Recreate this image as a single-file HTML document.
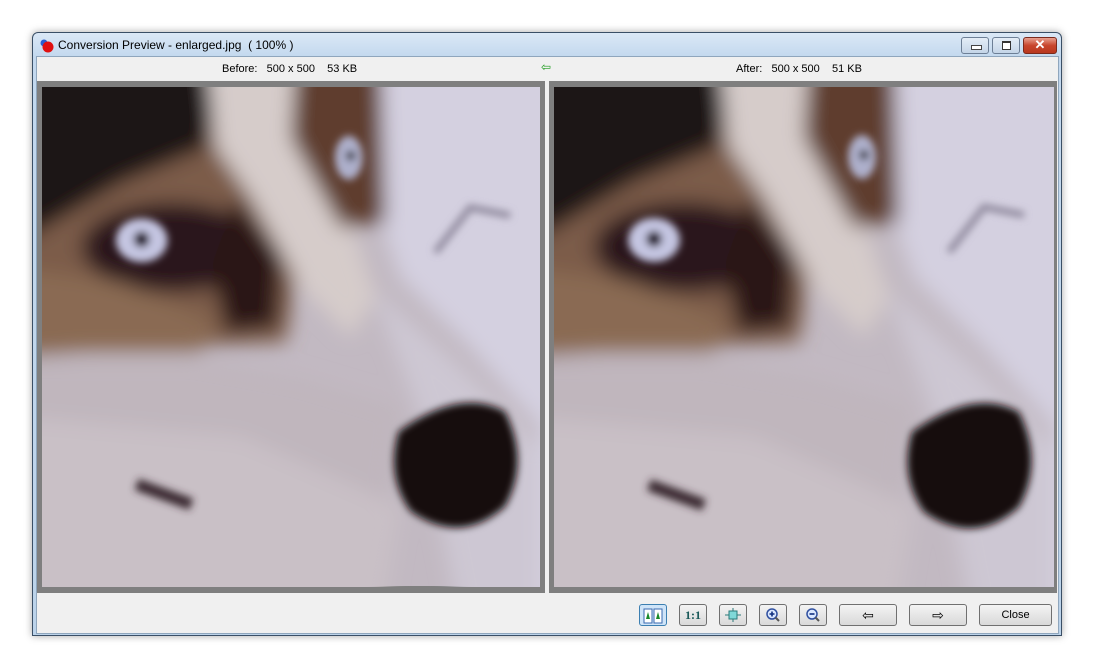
<!DOCTYPE html>
<html><head><meta charset="utf-8"><style>
html,body{margin:0;padding:0;width:1094px;height:668px;background:#fff;overflow:hidden;font-family:"Liberation Sans",sans-serif;}
.win{position:absolute;left:32px;top:32px;width:1028px;height:602px;border:1px solid #3a4f66;border-radius:6px 6px 0 0;background:linear-gradient(#dbe8f6,#c3d8ee 24px,#bcd3ea);box-shadow:0 0 8px rgba(0,0,0,.35);}
.title{position:absolute;left:25px;top:5px;font-size:12px;color:#000;}
.ico{position:absolute;left:7px;top:6px;width:14px;height:14px;}
.content{position:absolute;left:3px;top:23px;width:1021px;height:576px;background:#f0f0f0;border:1px solid #8fa6bd;}
.hdr{position:absolute;top:6px;font-size:11px;}
.panel{position:absolute;top:24px;width:508px;height:512px;background:#7f7f7f;}
.panel svg{position:absolute;left:5px;top:6px;}
.btn{position:absolute;top:547px;height:22px;border:1px solid #707070;border-radius:3px;background:linear-gradient(#f4f4f4,#e6e6e6 50%,#d9d9d9);box-sizing:border-box;font-size:11px;text-align:center;line-height:20px;}
.wb{position:absolute;top:4px;height:17px;border:1px solid #6d7f96;border-radius:3px;box-sizing:border-box;background:linear-gradient(#e4edf7,#c4d5e8);}
</style></head><body>
<svg width="0" height="0" style="position:absolute"><defs>
<filter id="b" x="-20%" y="-20%" width="140%" height="140%"><feGaussianBlur stdDeviation="10"/></filter>
<filter id="c" x="-20%" y="-20%" width="140%" height="140%"><feGaussianBlur stdDeviation="4"/></filter>
<g id="dog">
   <rect width="500" height="500" fill="#c2b9c2"/>
   <g filter="url(#b)">
    <path d="M330 -30H540V540H500L500 340 430 260 360 190 335 120Z" fill="#d4d0e0"/>
    <path d="M330 200 420 280 500 360 500 540 420 540 380 330Z" fill="#cdc7d3"/>
    <path d="M-30 -30H235L265 120 245 255 120 260 -30 270Z" fill="#7c5c48"/>
    <path d="M-30 -30H180L165 60 80 95 -30 160Z" fill="#1e1216"/>
    <path d="M165 -30H255L335 210 310 250 260 200 210 110 175 60Z" fill="#d6ccca"/>
    <path d="M255 -30H340L345 135 300 140 250 50Z" fill="#5e3c2e"/>
    <ellipse cx="130" cy="160" rx="90" ry="45" fill="#2c171a"/>
    <path d="M195 110 240 170 235 240 185 245 170 180Z" fill="#2a1618"/>
    <path d="M-30 180 80 195 175 235 160 265 -30 265Z" fill="#8a6a52"/>
    <path d="M-30 270 150 270 260 290 360 320 330 540 -30 540Z" fill="#c0b6bd"/>
    <path d="M-30 330 200 350 360 420 340 540 -30 540Z" fill="#c9c0c6"/>
   </g>
   <g filter="url(#c)">
    <ellipse cx="100" cy="153" rx="26" ry="22" fill="#c5c6e2"/>
    <circle cx="100" cy="152" r="8" fill="#1a1020"/>
    <ellipse cx="308" cy="70" rx="14" ry="22" fill="#aeb0cc"/>
    <circle cx="310" cy="68" r="5" fill="#222"/>
    <path d="M395 165 430 120 470 128" stroke="#8a8498" stroke-width="6" fill="none"/>
    <path d="M358 345Q420 300 465 325 490 375 465 420 420 460 370 425 345 390 358 345Z" fill="#140810"/>
    <path d="M95 398 150 418" stroke="#3a2a30" stroke-width="12" fill="none"/>
   </g>
</g></defs></svg>
<div class="win">
 <svg class="ico" viewBox="0 0 14 14"><circle cx="4" cy="4" r="3.5" fill="#2a5fd0"/><circle cx="8" cy="8" r="5.5" fill="#e01010"/></svg>
 <div class="title">Conversion Preview - enlarged.jpg &nbsp;( 100% )</div>
 <div class="wb" style="left:928px;width:28px"><div style="position:absolute;left:9px;top:7px;width:9px;height:3px;border:1px solid #444;background:#fff"></div></div>
 <div class="wb" style="left:959px;width:28px"><div style="position:absolute;left:9px;top:3px;width:7px;height:6px;border:1px solid #333;border-top-width:2px;background:#fff"></div></div>
 <div class="wb" style="left:990px;width:34px;background:linear-gradient(#e8a090,#c8452c 50%,#b8381f);border-color:#7a2a1d;color:#fff;font-weight:bold;font-size:13px;text-align:center;line-height:14px">✕</div>
 <div class="content">
  <div class="hdr" style="left:185px">Before: &nbsp; 500 x 500 &nbsp;&nbsp; 53 KB</div>
  <div class="hdr" style="left:504px;color:#1a9a1a;font-size:12px;top:3px">⇦</div>
  <div class="hdr" style="left:699px">After: &nbsp; 500 x 500 &nbsp;&nbsp; 51 KB</div>
  <div class="panel" style="left:0"><svg width="498" height="500" viewBox="0 0 500 500"><use href="#dog"/></svg></div>
  <div class="panel" style="left:512px"><svg width="500" height="500" viewBox="0 0 500 500"><use href="#dog"/></svg></div>
  <div class="btn" style="left:602px;width:28px;background:#cfe4f8;border-color:#3c7fb1"><svg width="20" height="16" viewBox="0 0 20 16" style="margin-top:3px"><rect x="1" y="1" width="8" height="14" fill="#fff" stroke="#3a6ab0"/><rect x="11" y="1" width="8" height="14" fill="#fff" stroke="#3a6ab0"/><path d="M5 4 3 11H7Z M15 4 13 11H17Z" fill="#1a8a2a"/></svg></div>
  <div class="btn" style="left:642px;width:28px;font-weight:bold;color:#1a5a5a;font-family:'Liberation Serif',serif;font-size:12px">1:1</div>
  <div class="btn" style="left:682px;width:28px"><svg width="16" height="14" viewBox="0 0 16 14" style="margin-top:3px"><rect x="4" y="3" width="8" height="8" fill="#7fd8d8" stroke="#2a7a7a"/><path d="M8 0V3M8 11V14M0 7H4M12 7H16" stroke="#2a7a7a"/></svg></div>
  <div class="btn" style="left:722px;width:28px"><svg width="16" height="16" viewBox="0 0 16 16" style="margin-top:2px"><circle cx="7" cy="7" r="5" fill="#dbe8ff" stroke="#3050a0" stroke-width="1.5"/><path d="M4.5 7H9.5M7 4.5V9.5" stroke="#103080" stroke-width="1.6"/><path d="M10.5 10.5 14 14" stroke="#555" stroke-width="2"/></svg></div>
  <div class="btn" style="left:762px;width:28px"><svg width="16" height="16" viewBox="0 0 16 16" style="margin-top:2px"><circle cx="7" cy="7" r="5" fill="#dbe8ff" stroke="#3050a0" stroke-width="1.5"/><path d="M4.5 7H9.5" stroke="#103080" stroke-width="1.6"/><path d="M10.5 10.5 14 14" stroke="#555" stroke-width="2"/></svg></div>
  <div class="btn" style="left:802px;width:58px;font-size:14px">⇦</div>
  <div class="btn" style="left:872px;width:58px;font-size:14px">⇨</div>
  <div class="btn" style="left:942px;width:73px">Close</div>
 </div>
</div>
</body></html>
